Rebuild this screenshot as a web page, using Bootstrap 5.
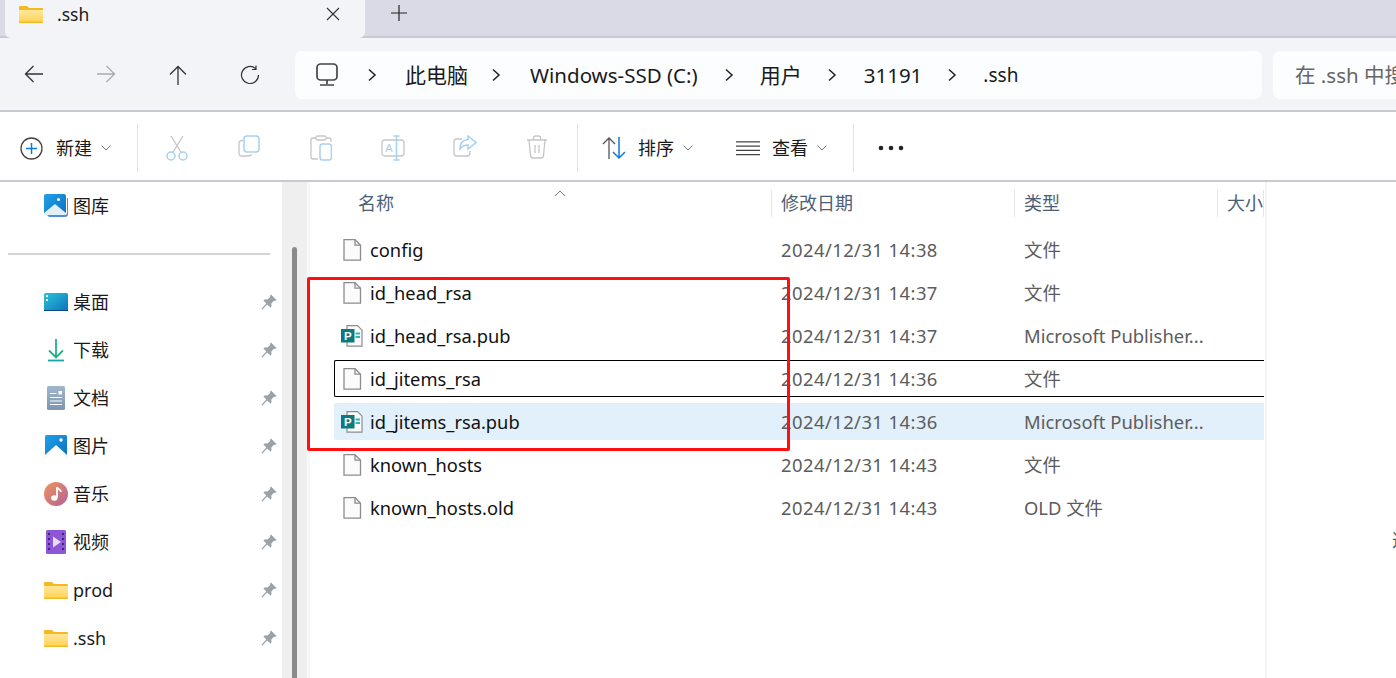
<!DOCTYPE html>
<html lang="zh">
<head>
<meta charset="UTF-8">
<title>.ssh</title>
<link href="https://cdn.jsdelivr.net/npm/bootstrap@5.3.0/dist/css/bootstrap.min.css" rel="stylesheet">
<script src="https://cdn.jsdelivr.net/npm/bootstrap@5.3.0/dist/js/bootstrap.bundle.min.js"></script>
<style>
html, body { height: 678px; overflow: hidden; }
body { font-family: "Noto Sans", "Noto Sans CJK SC", sans-serif; font-size: 18px; color: #1a1a1a; background: #fff; }
svg { display: block; flex: none; }
/* tab strip */
.ex-tabs { height: 38px; background: #d9dae5; border-bottom: 2px solid #c9c9d3; padding-left: 5px; }
.ex-tab { width: 360px; height: 38px; background: #f3f4f8; border-radius: 0 0 6px 6px; padding: 0 25px 10px 14px; }
.ex-tab-name { margin-left: 14px; line-height: 1; margin-top: 1px; font-size: 17.5px; }
.ex-newtab { margin-left: 26px; padding-bottom: 10px; }
/* address row */
.ex-addr { height: 74px; background: #f3f4f8; border-bottom: 2px solid #c9c9d3; padding: 2px 0 0 0; }
.ex-navs { margin-left: -2px; }
.ex-navbtn { width: 72px; }
.ex-path { width: 967px; height: 48px; margin-left: 9px; background: #fcfdfe; border-radius: 7px; padding-left: 21px; font-size: 20.5px; }
.ex-path span { line-height: 1; }
.ex-path .ex-cjk { font-size: 21px; }
.ex-path .ex-dot { font-size: 19px; margin-left: -1px; }
.ex-search { flex: 1; height: 48px; margin-left: 11px; padding-left: 22px; background: #fcfdfe; border-radius: 7px 0 0 7px; color: #666; font-size: 20.5px; white-space: nowrap; overflow: hidden; }
/* toolbar */
.ex-tools { height: 70px; border-bottom: 2px solid #c9c9d3; padding-top: 4px; }
.ex-sep { width: 1px; height: 48px; background: #e4e4e6; }
.ex-tool { width: 72px; }
.ex-cmds { margin-left: 3px; }
.ex-new { width: 137px; padding-left: 20px; }
.ex-tool-label { margin-left: 13px; }
.ex-sort { width: 275px; padding-left: 24px; }
.ex-sort .ex-tool-label { margin-left: 11px; }
.ex-view { margin-left: 42px; width: 24px; }
.ex-sort .ex-view-label { margin-left: 12px; }
/* sidebar */
.ex-body { height: 496px; }
.ex-side { width: 282px; overflow: hidden; }
.ex-item { height: 48px; flex: none; padding-left: 44px; padding-right: 5px; }
.ex-item-label { margin-left: 5px; }
.ex-rule { height: 48px; flex: none; padding: 0 12px 0 8px; }
.ex-rule div { height: 2px; width: 100%; background: #d4d4d4; }
.ex-track { width: 25px; background: #efefef; padding: 65px 10px 0; }
.ex-thumb { height: 100%; background: #8a8a8a; border-radius: 3px 3px 0 0; }
.ex-gutter { width: 3px; background: #f7f7f7; }
/* file list */
.ex-list { width: 955px; padding-left: 24px; overflow: hidden; }
.ex-head { height: 49px; flex: none; color: #4c6075; display: grid; grid-template-columns: 438px 243px 203px 46px; padding-bottom: 7px; white-space: nowrap; }
.ex-head div { border-right: 1px solid #e5e5e5; padding-left: 9px; overflow: hidden; }
.ex-head .ex-name { padding-left: 24px; position: relative; overflow: visible; }
.ex-sortcaret { position: absolute; left: 220px; top: 0; }
.ex-rows { gap: 6px; }
.ex-row { height: 37px; display: grid; grid-template-columns: 446px 243px 1fr; align-items: center; width: 930px; border: 1px solid transparent; white-space: nowrap; border-radius: 2px 0 0 2px; }
.ex-row.ex-focus { border: 1px solid #000; border-right: 0; }
.ex-row.ex-selected { background: #e2f0fc; }
.ex-fname { gap: 7px; padding-left: 6px; font-size: 18.3px; color: #111; }
.ex-meta { color: #5c5c5c; font-size: 18.4px; }
.ex-date { letter-spacing: .45px; }
.ex-preview { flex: 1; border-left: 2px solid #f5f5f5; overflow: hidden; padding: 345px 0 0 125px; color: #555; white-space: nowrap; }
/* red annotation drawn on top of the shot */
.ex-mark { position: absolute; left: 307px; top: 277px; width: 483px; height: 174px; border: 3px solid #ff1010; border-radius: 2px; pointer-events: none; }
</style>
</head>
<body>
<svg width="0" height="0" class="position-absolute">
  <defs>
    <linearGradient id="fold" x1="0" y1="0" x2="0" y2="1"><stop offset="0" stop-color="#ffe79c"/><stop offset="1" stop-color="#ffd45a"/></linearGradient>
    <linearGradient id="sky" x1="0" y1="0" x2="1" y2="1"><stop offset="0" stop-color="#1ea1e8"/><stop offset="1" stop-color="#0f6fc0"/></linearGradient>
    <linearGradient id="desk" x1="0" y1="0" x2="1" y2="1"><stop offset="0" stop-color="#2bc4d8"/><stop offset="1" stop-color="#0e72bd"/></linearGradient>
    <linearGradient id="doc" x1="0" y1="0" x2="0" y2="1"><stop offset="0" stop-color="#a2b6cc"/><stop offset="1" stop-color="#7e96b2"/></linearGradient>
    <linearGradient id="mus" x1="0" y1="0" x2="1" y2="1"><stop offset="0" stop-color="#f0955a"/><stop offset="1" stop-color="#b0609c"/></linearGradient>
    <symbol id="i-folder" viewBox="0 0 24 18">
      <path d="M0 2a1 1 0 0 1 1-1h7l2 2h13a1 1 0 0 1 1 1v13a1 1 0 0 1-1 1H1a1 1 0 0 1-1-1z" fill="#f5b81f"/>
      <path d="M0 5h24v11.500H0z" fill="url(#fold)"/>
    </symbol>
    <symbol id="i-file" viewBox="0 0 20 22">
      <path d="M2 .7h11l5.500 5.500v15H2z" fill="#fbfbfb" stroke="#8c8c8c" stroke-width="1.300"/>
      <path d="M13 .7v5.500h5.500" fill="none" stroke="#8c8c8c" stroke-width="1.300"/>
    </symbol>
    <symbol id="i-pub" viewBox="0 0 22 22">
      <path d="M6 .7h10.500l4.500 4.500v16H6z" fill="#fbfbfb" stroke="#8c8c8c" stroke-width="1.200"/>
      <path d="M14.500 8.500h4.500M14.500 12h4.500" stroke="#25b7c4" stroke-width="1.800"/>
      <rect x="0" y="4" width="13.500" height="13.500" fill="#0b7a80"/>
      <text x="6.800" y="15" text-anchor="middle" font-family="Liberation Sans" font-size="11.500" font-weight="700" fill="#fff">P</text>
    </symbol>
    <symbol id="i-pin" viewBox="0 0 16 16">
      <path d="M10 .5l5.500 5.500-1.500 1-1-.3-2.700 2.700.2 3-1.200 1.200-3-3L1.300 15.600.4 14.700l5-5.100-3-3L3.600 5.400l3 .2 2.700-2.700-.3-1z" fill="#98a2aa"/>
    </symbol>
    <symbol id="i-down" viewBox="0 0 12 8"><path d="M1.500 1.500L6 6l4.500-4.500" fill="none" stroke="#777" stroke-width="1"/></symbol>
    <symbol id="i-chev" viewBox="0 0 10 14"><path d="M2 1.500L8 7l-6 5.500" fill="none" stroke="#222" stroke-width="1.500"/></symbol>
  </defs>
</svg>

<div class="ex-tabs d-flex">
  <div class="ex-tab d-flex align-items-center">
    <svg width="24" height="18"><use href="#i-folder"/></svg>
    <span class="ex-tab-name">.ssh</span>
    <svg class="ms-auto" width="14" height="14" viewBox="0 0 14 14"><path d="M1 1l12 12M13 1L1 13" stroke="#333" stroke-width="1.100"/></svg>
  </div>
  <div class="ex-newtab d-flex align-items-center">
    <svg width="16" height="16" viewBox="0 0 16 16"><path d="M8 0v16M0 8h16" stroke="#222" stroke-width="1.200"/></svg>
  </div>
</div>

<div class="ex-addr d-flex align-items-center">
  <div class="ex-navs d-flex">
    <div class="ex-navbtn d-flex justify-content-center">
      <svg width="20" height="18" viewBox="0 0 20 18"><path d="M19 9H1.500M9.500 1l-8 8 8 8" fill="none" stroke="#333" stroke-width="1.300"/></svg>
    </div>
    <div class="ex-navbtn d-flex justify-content-center">
      <svg width="20" height="18" viewBox="0 0 20 18"><path d="M1 9h17.500M10.500 1l8 8-8 8" fill="none" stroke="#aaa" stroke-width="1.300"/></svg>
    </div>
    <div class="ex-navbtn d-flex justify-content-center">
      <svg width="18" height="20" viewBox="0 0 18 20"><path d="M9 20V1.500M1 9.500l8-8 8 8" fill="none" stroke="#333" stroke-width="1.300"/></svg>
    </div>
    <div class="ex-navbtn d-flex justify-content-center">
      <svg width="20" height="20" viewBox="0 0 20 20"><path d="M15.500 3.500A8.500 8.500 0 1 0 18.500 10M16 .5v4h-4" fill="none" stroke="#333" stroke-width="1.200"/></svg>
    </div>
  </div>
  <div class="ex-path d-flex align-items-center">
    <svg width="22" height="24" viewBox="0 0 22 24"><rect x="1" y="1" width="20" height="16" rx="3.500" fill="none" stroke="#444" stroke-width="1.700"/><path d="M11 17v4M4 22h14" stroke="#444" stroke-width="1.700"/></svg>
    <svg style="margin:0 28px 0 29px" width="10" height="14"><use href="#i-chev"/></svg>
    <span class="ex-cjk">此电脑</span>
    <svg style="margin:0 29px 0 23px" width="10" height="14"><use href="#i-chev"/></svg>
    <span>Windows-SSD (C:)</span>
    <svg style="margin:0 26px 0 26px" width="10" height="14"><use href="#i-chev"/></svg>
    <span class="ex-cjk">用户</span>
    <svg style="margin:0 27px 0 25px" width="10" height="14"><use href="#i-chev"/></svg>
    <span>31191</span>
    <svg style="margin:0 27px 0 25px" width="10" height="14"><use href="#i-chev"/></svg>
    <span class="ex-dot">.ssh</span>
  </div>
  <div class="ex-search d-flex align-items-center">在 .ssh 中搜索</div>
</div>

<div class="ex-tools d-flex align-items-center">
  <div class="ex-new d-flex align-items-center">
    <svg width="23" height="23" viewBox="0 0 23 23"><circle cx="11.500" cy="11.500" r="10.500" fill="none" stroke="#444" stroke-width="1.300"/><path d="M11.500 6v11M6 11.500h11" stroke="#0f7bd4" stroke-width="1.500"/></svg>
    <span class="ex-tool-label">新建</span>
    <svg class="ms-2" width="12" height="8"><use href="#i-down"/></svg>
  </div>
  <div class="ex-sep"></div>
  <div class="ex-cmds d-flex">
    <div class="ex-tool d-flex justify-content-center">
      <svg width="22" height="26" viewBox="0 0 22 26"><path d="M5 1l10.500 17M17 1L6.500 18" fill="none" stroke="#c6c6c6" stroke-width="1.300"/><circle cx="5" cy="21" r="4" fill="none" stroke="#a6d0f2" stroke-width="1.500"/><circle cx="17" cy="21" r="4" fill="none" stroke="#a6d0f2" stroke-width="1.500"/></svg>
    </div>
    <div class="ex-tool d-flex justify-content-center">
      <svg width="22" height="22" viewBox="0 0 22 22"><path d="M5 5.500H3.500A2.500 2.500 0 0 0 1 8v10.500A2.500 2.500 0 0 0 3.500 21H11a3 3 0 0 0 2.500-2" fill="none" stroke="#c6c6c6" stroke-width="1.300"/><rect x="6" y="1" width="15" height="16" rx="3" fill="none" stroke="#a6d0f2" stroke-width="1.500"/></svg>
    </div>
    <div class="ex-tool d-flex justify-content-center">
      <svg width="22" height="26" viewBox="0 0 22 26"><path d="M6 3H3a2 2 0 0 0-2 2v17a2 2 0 0 0 2 2h5M16 3h3a2 2 0 0 1 2 2v2" fill="none" stroke="#c6c6c6" stroke-width="1.300"/><rect x="6" y="1" width="10" height="4" rx="1.500" fill="none" stroke="#c6c6c6" stroke-width="1.300"/><rect x="10" y="9" width="11.500" height="16" rx="2.500" fill="none" stroke="#a6d0f2" stroke-width="1.500"/></svg>
    </div>
    <div class="ex-tool d-flex justify-content-center">
      <svg width="24" height="26" viewBox="0 0 24 26"><rect x="1" y="5" width="22" height="16" rx="3" fill="none" stroke="#c6c6c6" stroke-width="1.300"/><path d="M15.500 1v24M12.500 1h6M12.500 25h6" stroke="#a6d0f2" stroke-width="1.500" fill="none"/><text x="8" y="17" text-anchor="middle" font-family="Liberation Sans" font-size="11" fill="#a6d0f2">A</text></svg>
    </div>
    <div class="ex-tool d-flex justify-content-center">
      <svg width="24" height="22" viewBox="0 0 24 22"><path d="M9 4H4a3 3 0 0 0-3 3v11a3 3 0 0 0 3 3h10a3 3 0 0 0 3-3v-2" fill="none" stroke="#c6c6c6" stroke-width="1.300"/><path d="M15 1l8 6.500-8 6.500v-4c-4 0-6 1.500-8 4 0-6 3-9 8-9.500z" fill="none" stroke="#a6d0f2" stroke-width="1.500"/></svg>
    </div>
    <div class="ex-tool d-flex justify-content-center">
      <svg width="22" height="24" viewBox="0 0 22 24"><path d="M1 5h20M7.500 5V3a2 2 0 0 1 2-2h3a2 2 0 0 1 2 2v2M3 5l1.500 16a2.500 2.500 0 0 0 2.500 2h8a2.500 2.500 0 0 0 2.500-2L19 5M9 10v8M13 10v8" fill="none" stroke="#c6c6c6" stroke-width="1.300"/></svg>
    </div>
  </div>
  <div class="ex-sep ms-1"></div>
  <div class="ex-sort d-flex align-items-center">
    <svg width="25" height="24" viewBox="0 0 25 24"><path d="M7 23V2M1 8l6-6 6 6" fill="none" stroke="#555" stroke-width="1.300"/><path d="M17 1v21M11 16l6 6 6-6" fill="none" stroke="#0f7bd4" stroke-width="1.500"/></svg>
    <span class="ex-tool-label">排序</span>
    <svg class="ms-2" width="12" height="8"><use href="#i-down"/></svg>
    <svg class="ex-view" width="24" height="16" viewBox="0 0 25 16"><path d="M0 1.500h25M0 6h25M0 10.500h25M0 15h25" stroke="#444" stroke-width="1.300"/></svg>
    <span class="ex-tool-label ex-view-label">查看</span>
    <svg class="ms-2" width="12" height="8"><use href="#i-down"/></svg>
  </div>
  <div class="ex-sep"></div>
  <svg class="ms-4" width="26" height="6" viewBox="0 0 26 6"><circle cx="3" cy="3" r="2.300" fill="#222"/><circle cx="13" cy="3" r="2.300" fill="#222"/><circle cx="23" cy="3" r="2.300" fill="#222"/></svg>
</div>

<div class="ex-body d-flex">
  <nav class="ex-side d-flex flex-column">
    <div class="ex-item d-flex align-items-center">
      <svg width="24" height="24" viewBox="0 0 24 24"><path d="M3 21h18a2 2 0 0 0 2-2V4h1v16a3 3 0 0 1-3 3H5z" fill="#4d8fd0"/><rect width="22" height="21" rx="2" fill="url(#sky)"/><path d="M0 19L11 10l11 9v1a1 1 0 0 1-1 1H1a1 1 0 0 1-1-1z" fill="#e3effa"/><circle cx="14.500" cy="5.500" r="1.500" fill="#fff"/></svg>
      <span class="ex-item-label">图库</span>
    </div>
    <div class="ex-rule d-flex align-items-center"><div></div></div>
    <div class="ex-item d-flex align-items-center">
      <svg width="24" height="18" viewBox="0 0 24 18"><rect width="24" height="18" rx="1.500" fill="url(#desk)"/><path d="M0 17h24v1H0z" fill="#0b4a7e"/><rect x="2" y="2" width="2" height="2" fill="#fff"/><rect x="2" y="6" width="2" height="2" fill="#fff"/></svg>
      <span class="ex-item-label">桌面</span>
      <svg class="ms-auto" width="16" height="16"><use href="#i-pin"/></svg>
    </div>
    <div class="ex-item d-flex align-items-center">
      <svg width="24" height="24" viewBox="0 0 24 24"><path d="M12 1v18M5 12.500l7 7 7-7" fill="none" stroke="#22b08c" stroke-width="1.800"/><path d="M4 22.500h16" stroke="#18a8a0" stroke-width="1.800"/></svg>
      <span class="ex-item-label">下载</span>
      <svg class="ms-auto" width="16" height="16"><use href="#i-pin"/></svg>
    </div>
    <div class="ex-item d-flex align-items-center">
      <svg width="24" height="24" viewBox="0 0 24 24"><rect x="3" width="18" height="24" rx="1.500" fill="url(#doc)"/><path d="M6 7.500h6.500M6 11.500h12M6 15h12M6 18.500h12" stroke="#fff" stroke-width="1"/><rect x="14.500" y="5" width="3.500" height="3.500" fill="#fff"/></svg>
      <span class="ex-item-label">文档</span>
      <svg class="ms-auto" width="16" height="16"><use href="#i-pin"/></svg>
    </div>
    <div class="ex-item d-flex align-items-center">
      <svg width="24" height="22" viewBox="0 0 24 22"><rect x="1" width="22" height="22" rx="1.500" fill="url(#sky)"/><path d="M1 20L12 10l11 10v1a1 1 0 0 1-1 1H2a1 1 0 0 1-1-1z" fill="#fff"/><circle cx="17" cy="5" r="1.700" fill="#fff"/></svg>
      <span class="ex-item-label">图片</span>
      <svg class="ms-auto" width="16" height="16"><use href="#i-pin"/></svg>
    </div>
    <div class="ex-item d-flex align-items-center">
      <svg width="24" height="24" viewBox="0 0 24 24"><circle cx="12" cy="12" r="12" fill="url(#mus)"/><path d="M13 5v10.500" stroke="#fff" stroke-width="1.800"/><path d="M13 5c1 2.500 4 2.500 4 5" fill="none" stroke="#fff" stroke-width="1.800"/><ellipse cx="10.300" cy="16" rx="3.200" ry="2.700" fill="#fff"/></svg>
      <span class="ex-item-label">音乐</span>
      <svg class="ms-auto" width="16" height="16"><use href="#i-pin"/></svg>
    </div>
    <div class="ex-item d-flex align-items-center">
      <svg width="24" height="24" viewBox="0 0 24 24"><rect x="2" width="20" height="24" rx="1.500" fill="#8d55d8"/><path d="M4 3h2v2H4zM4 8h2v2H4zM4 13h2v2H4zM4 18h2v2H4zM18 3h2v2h-2zM18 8h2v2h-2zM18 13h2v2h-2zM18 18h2v2h-2z" fill="#3f2573"/><path d="M9 6.500l8 5.500-8 5.500z" fill="#e8dcfb"/></svg>
      <span class="ex-item-label">视频</span>
      <svg class="ms-auto" width="16" height="16"><use href="#i-pin"/></svg>
    </div>
    <div class="ex-item d-flex align-items-center">
      <svg width="24" height="18"><use href="#i-folder"/></svg>
      <span class="ex-item-label">prod</span>
      <svg class="ms-auto" width="16" height="16"><use href="#i-pin"/></svg>
    </div>
    <div class="ex-item d-flex align-items-center">
      <svg width="24" height="18"><use href="#i-folder"/></svg>
      <span class="ex-item-label">.ssh</span>
      <svg class="ms-auto" width="16" height="16"><use href="#i-pin"/></svg>
    </div>
    <div class="ex-item d-flex align-items-center">
      <svg width="24" height="18"><use href="#i-folder"/></svg>
    </div>
  </nav>
  <div class="ex-track"><div class="ex-thumb"></div></div>
  <div class="ex-gutter"></div>

  <main class="ex-list d-flex flex-column">
    <div class="ex-head align-items-center">
      <div class="ex-name">名称
        <svg class="ex-sortcaret" width="12" height="7" viewBox="0 0 12 7"><path d="M1 6l5-5 5 5" fill="none" stroke="#777"/></svg>
      </div>
      <div>修改日期</div>
      <div>类型</div>
      <div>大小</div>
    </div>
    <div class="ex-rows d-flex flex-column" id="fileRows"></div>
  </main>
  <div class="ex-preview">选择要预览的文件</div>
</div>

<div class="ex-mark"></div>

<script>
const files = [
  { name: "config", date: "2024/12/31 14:38", type: "文件" },
  { name: "id_head_rsa", date: "2024/12/31 14:37", type: "文件" },
  { name: "id_head_rsa.pub", date: "2024/12/31 14:37", type: "Microsoft Publisher...", pub: true },
  { name: "id_jitems_rsa", date: "2024/12/31 14:36", type: "文件", cls: "ex-focus" },
  { name: "id_jitems_rsa.pub", date: "2024/12/31 14:36", type: "Microsoft Publisher...", pub: true, cls: "ex-selected" },
  { name: "known_hosts", date: "2024/12/31 14:43", type: "文件" },
  { name: "known_hosts.old", date: "2024/12/31 14:43", type: "OLD 文件" }
];
document.getElementById("fileRows").innerHTML = files.map(f => `
  <div class="ex-row ${f.cls || ""}">
    <div class="ex-fname d-flex align-items-center">
      <svg width="22" height="22"><use href="#${f.pub ? "i-pub" : "i-file"}"/></svg>
      <span>${f.name}</span>
    </div>
    <div class="ex-meta ex-date">${f.date}</div>
    <div class="ex-meta">${f.type}</div>
  </div>`).join("");
</script>
</body>
</html>
